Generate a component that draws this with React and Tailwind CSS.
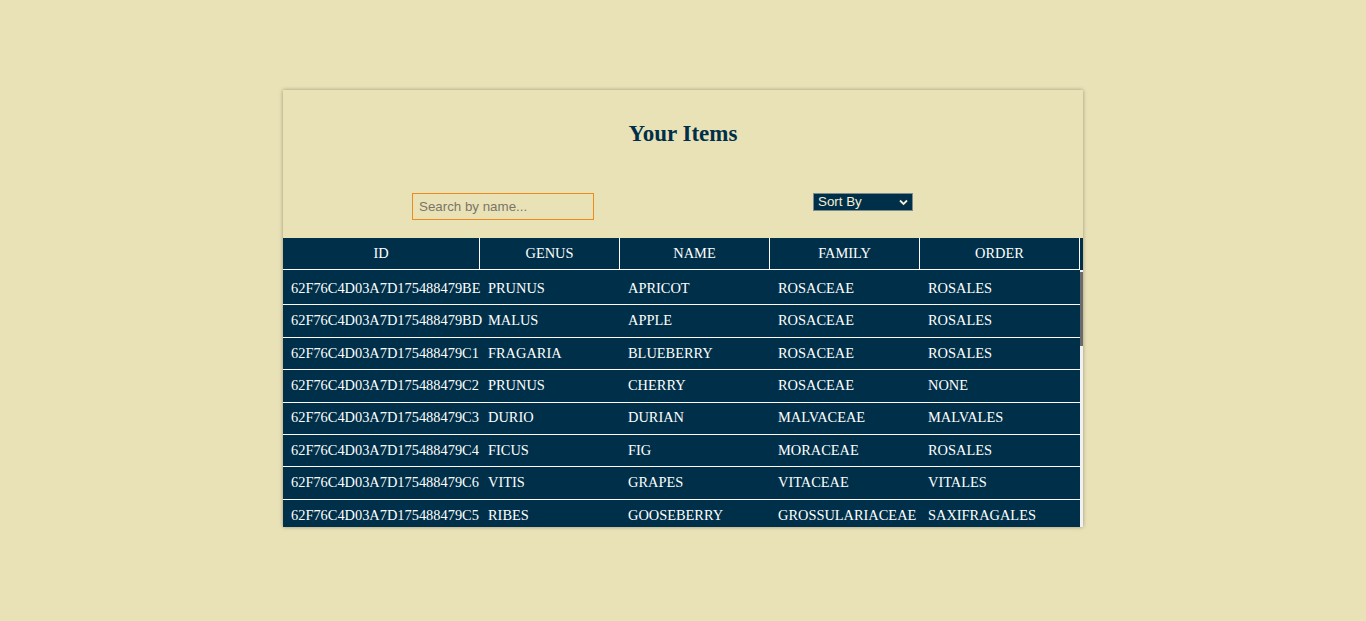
import { useState } from 'react'

const items = [
  ['62F76C4D03A7D175488479BE', 'PRUNUS', 'APRICOT', 'ROSACEAE', 'ROSALES'],
  ['62F76C4D03A7D175488479BD', 'MALUS', 'APPLE', 'ROSACEAE', 'ROSALES'],
  ['62F76C4D03A7D175488479C1', 'FRAGARIA', 'BLUEBERRY', 'ROSACEAE', 'ROSALES'],
  ['62F76C4D03A7D175488479C2', 'PRUNUS', 'CHERRY', 'ROSACEAE', 'NONE'],
  ['62F76C4D03A7D175488479C3', 'DURIO', 'DURIAN', 'MALVACEAE', 'MALVALES'],
  ['62F76C4D03A7D175488479C4', 'FICUS', 'FIG', 'MORACEAE', 'ROSALES'],
  ['62F76C4D03A7D175488479C6', 'VITIS', 'GRAPES', 'VITACEAE', 'VITALES'],
  ['62F76C4D03A7D175488479C5', 'RIBES', 'GOOSEBERRY', 'GROSSULARIACEAE', 'SAXIFRAGALES'],
  ['62F76C4D03A7D175488479C7', 'PSIDIUM', 'GUAVA', 'MYRTACEAE', 'MYRTALES'],
  ['62F76C4D03A7D175488479C8', 'ACTINIDIA', 'KIWI', 'ACTINIDIACEAE', 'ERICALES'],
  ['62F76C4D03A7D175488479C9', 'CITRUS', 'LEMON', 'RUTACEAE', 'SAPINDALES'],
  ['62F76C4D03A7D175488479CA', 'CITRUS', 'LIME', 'RUTACEAE', 'SAPINDALES'],
  ['62F76C4D03A7D175488479CB', 'LITCHI', 'LYCHEE', 'SAPINDACEAE', 'SAPINDALES'],
  ['62F76C4D03A7D175488479CC', 'MANGIFERA', 'MANGO', 'ANACARDIACEAE', 'SAPINDALES'],
  ['62F76C4D03A7D175488479CD', 'CUCUMIS', 'MELON', 'CUCURBITACEAE', 'CUCURBITALES'],
  ['62F76C4D03A7D175488479CE', 'CITRUS', 'ORANGE', 'RUTACEAE', 'SAPINDALES'],
  ['62F76C4D03A7D175488479CF', 'CARICA', 'PAPAYA', 'CARICACEAE', 'BRASSICALES'],
  ['62F76C4D03A7D175488479D0', 'PASSIFLORA', 'PASSIONFRUIT', 'PASSIFLORACEAE', 'MALPIGHIALES'],
  ['62F76C4D03A7D175488479D1', 'PRUNUS', 'PEACH', 'ROSACEAE', 'ROSALES'],
  ['62F76C4D03A7D175488479D2', 'PYRUS', 'PEAR', 'ROSACEAE', 'ROSALES'],
  ['62F76C4D03A7D175488479D3', 'DIOSPYROS', 'PERSIMMON', 'EBENACEAE', 'ERICALES'],
  ['62F76C4D03A7D175488479D4', 'ANANAS', 'PINEAPPLE', 'BROMELIACEAE', 'POALES'],
  ['62F76C4D03A7D175488479D5', 'PRUNUS', 'PLUM', 'ROSACEAE', 'ROSALES'],
  ['62F76C4D03A7D175488479D6', 'PUNICA', 'POMEGRANATE', 'LYTHRACEAE', 'MYRTALES'],
  ['62F76C4D03A7D175488479D7', 'RUBUS', 'RASPBERRY', 'ROSACEAE', 'ROSALES'],
  ['62F76C4D03A7D175488479D8', 'FRAGARIA', 'STRAWBERRY', 'ROSACEAE', 'ROSALES'],
  ['62F76C4D03A7D175488479D9', 'CITRULLUS', 'WATERMELON', 'CUCURBITACEAE', 'CUCURBITALES'],
]

const widths = ['w-[197px]', 'w-[140px]', 'w-[150px]', 'w-[150px]', 'w-[160px]']
const headers = ['ID', 'GENUS', 'NAME', 'FAMILY', 'ORDER']

export default function App() {
  const [query, setQuery] = useState('')

  const rows = items.filter(function(row) {
    return row[2].toLowerCase().includes(query.toLowerCase())
  })

  return (
    <div className="min-h-screen bg-[#eae2b7] pt-[90px] font-['Liberation_Serif',serif]">
      <div className="mx-auto w-[800px] bg-[#eae2b7] shadow-[0_0_4px_rgba(0,0,0,0.35)]">
        <h2 className="pt-[31px] text-center text-[23px] font-bold leading-[26px] text-[#003049]">
          Your Items
        </h2>

        <div className="mt-[46px] flex items-start pl-[129px]">
          <input
            autoFocus
            value={query}
            onChange={function(e) { setQuery(e.target.value) }}
            placeholder="Search by name..."
            className="block h-[27px] w-[182px] border border-[#f08a1c] bg-transparent px-[6px] font-['Liberation_Sans',sans-serif] text-[13.33px] text-[#003049] placeholder:text-[#7a7566] focus:outline-none"
          />
          <div className="relative ml-[219px] h-[18px] w-[100px]">
            <select className="block h-[18px] w-[100px] appearance-none border border-[#7d8a8f] bg-[#003049] pl-[4px] font-['Liberation_Sans',sans-serif] text-[13.33px] leading-[16px] text-[#f4eed2] outline-none">
              <option>Sort By</option>
              <option>Name</option>
              <option>Genus</option>
              <option>Family</option>
              <option>Order</option>
            </select>
            <svg
              className="pointer-events-none absolute right-[5px] top-[6px]"
              width="9"
              height="7"
              viewBox="0 0 9 7"
            >
              <path d="M1 1.5 L4.5 5 L8 1.5" stroke="#f4eed2" strokeWidth="1.8" fill="none" />
            </svg>
          </div>
        </div>

        <div className="mt-[18px] flex h-[32px] bg-[#003049] text-[14.4px] text-white">
          {headers.map(function(h, i) {
            return (
              <div
                key={h}
                className={widths[i] + ' flex items-center justify-center border-r border-b border-white'}
              >
                {h}
              </div>
            )
          })}
        </div>

        <div className="flex h-[257px]">
          <div className="w-[797px] overflow-y-auto bg-[#003049] pt-[3px] [scrollbar-width:none]">
            {rows.map(function(row) {
              return (
                <div
                  key={row[0]}
                  className="flex h-[32.4px] border-b border-white text-[14.4px] text-white"
                >
                  {row.map(function(cell, i) {
                    return (
                      <div key={i} className={widths[i] + ' flex items-center whitespace-nowrap px-[8px]'}>
                        {cell}
                      </div>
                    )
                  })}
                </div>
              )
            })}
          </div>
          <div className="flex w-[3px] flex-col bg-[#f1f1f1]">
            <div className="mt-[2px] h-[74px] bg-[#6b6b6b]" />
          </div>
        </div>
      </div>
    </div>
  )
}
